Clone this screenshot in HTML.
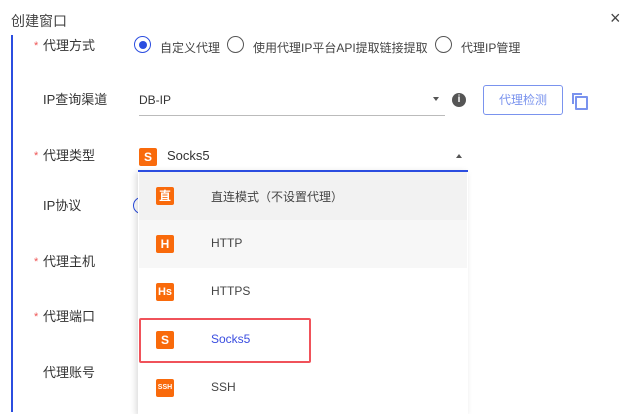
<!DOCTYPE html>
<html><head><meta charset="utf-8"><style>
body{margin:0;width:644px;height:412px;overflow:hidden;background:#fff;font-family:"Liberation Sans","Noto Sans CJK SC",sans-serif;color:#333;font-size:13px;position:relative}
.a{position:absolute;white-space:nowrap}
.lbl{position:absolute;left:43px;font-size:13px;color:#333;line-height:16px}
.st{position:absolute;left:34px;color:#e55;font-size:11px}
.rad{position:absolute;width:15px;height:15px;border:1.5px solid #555;border-radius:50%}
.ic{position:absolute;width:18px;height:18px;background:#f96a0b;border-radius:2px;color:#fff;font-weight:bold;font-size:12px;text-align:center;line-height:18px}
.row{position:absolute;left:139px;width:328px;height:48px}
.row span.t{position:absolute;left:72px;top:16px;font-size:12px;color:#444}
</style></head><body>
<div class="a" style="left:11px;top:11px;font-size:14px;color:#444">创建窗口</div>
<div class="a" style="left:610px;top:8px;font-size:18px;color:#444">×</div>
<div class="a" style="left:11px;top:35px;width:2px;height:377px;background:#2b4de0"></div>

<span class="st" style="top:40px">*</span><div class="lbl" style="top:38px">代理方式</div>
<div class="rad" style="left:134px;top:36px;border-color:#2b4de0"><div style="position:absolute;left:3.5px;top:3.5px;width:8px;height:8px;border-radius:50%;background:#2b4de0"></div></div>
<div class="a" style="left:160px;top:39px;font-size:12px;color:#444">自定义代理</div>
<div class="rad" style="left:227px;top:36px"></div>
<div class="a" style="left:253px;top:39px;font-size:12px;color:#444">使用代理IP平台API提取链接提取</div>
<div class="rad" style="left:435px;top:36px"></div>
<div class="a" style="left:461px;top:39px;font-size:12px;color:#444">代理IP管理</div>

<div class="lbl" style="top:92px">IP查询渠道</div>
<div class="a" style="left:139px;top:93px;font-size:12px;color:#333">DB-IP</div>
<div class="a" style="left:139px;top:115px;width:306px;height:1px;background:#bbb"></div>
<div class="a" style="left:433px;top:97px;width:0;height:0;border-left:3.5px solid transparent;border-right:3.5px solid transparent;border-top:4px solid #555"></div>
<div class="a" style="left:452px;top:93px;width:14px;height:14px;border-radius:50%;background:#555;color:#fff;font-size:10px;font-weight:bold;text-align:center;line-height:14px">i</div>
<div class="a" style="left:483px;top:85px;width:78px;height:28px;border:1px solid #7a93ee;border-radius:3px;color:#7a93ee;font-size:12px;text-align:center;line-height:28px">代理检测</div>
<div class="a" style="left:575px;top:96px;width:9px;height:10px;border:2px solid #7a93ee;border-radius:1px"></div>
<div class="a" style="left:572px;top:93px;width:2px;height:11px;background:#7a93ee"></div>
<div class="a" style="left:572px;top:93px;width:10px;height:2px;background:#7a93ee"></div>

<span class="st" style="top:150px">*</span><div class="lbl" style="top:148px">代理类型</div>
<div class="ic" style="left:139px;top:148px">S</div>
<div class="a" style="left:167px;top:148px;font-size:13px;color:#333">Socks5</div>
<div class="a" style="left:456px;top:154px;width:0;height:0;border-left:3.5px solid transparent;border-right:3.5px solid transparent;border-bottom:4px solid #555"></div>

<div class="lbl" style="top:198px">IP协议</div>
<div class="rad" style="left:133px;top:197px;border-color:#2b4de0"></div>
<span class="st" style="top:256px">*</span><div class="lbl" style="top:254px">代理主机</div>
<span class="st" style="top:311px">*</span><div class="lbl" style="top:309px">代理端口</div>
<div class="lbl" style="top:365px">代理账号</div>

<div class="a" style="left:138px;top:170px;width:330px;height:242px;background:#fff;box-shadow:-2px 2px 6px rgba(0,0,0,.15);border-top:2px solid #2b4de0"></div>
<div class="row" style="top:172px;background:#f2f2f2"><div class="ic" style="left:17px;top:15px">直</div><span class="t">直连模式（不设置代理）</span></div>
<div class="row" style="top:220px;background:#f7f7f7"><div class="ic" style="left:17px;top:15px">H</div><span class="t">HTTP</span></div>
<div class="row" style="top:268px"><div class="ic" style="left:17px;top:15px;font-size:11px">Hs</div><span class="t">HTTPS</span></div>
<div class="row" style="top:316px"><div class="ic" style="left:17px;top:15px">S</div><span class="t" style="color:#3a4de0">Socks5</span></div>
<div class="a" style="left:139px;top:318px;width:168px;height:41px;border:2px solid #f0525a;border-radius:2px"></div>
<div class="row" style="top:364px"><div class="ic" style="left:17px;top:15px;font-size:7px">SSH</div><span class="t">SSH</span></div>
</body></html>
